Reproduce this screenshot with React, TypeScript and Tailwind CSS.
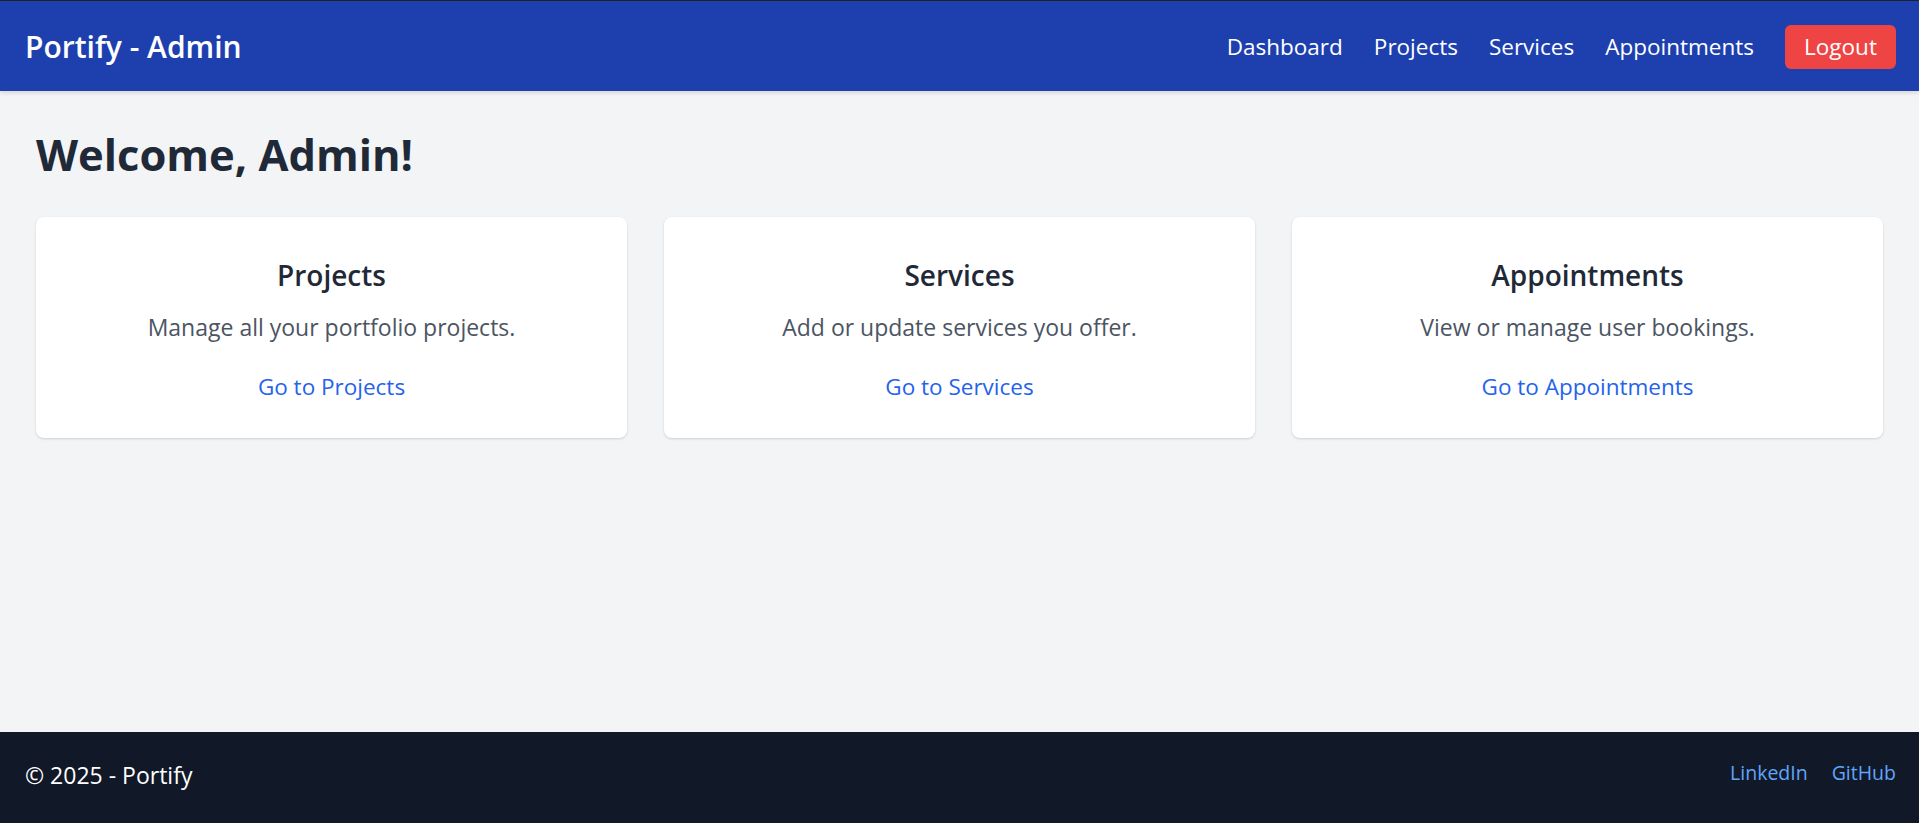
import React from "react";

const cards = [
  { title: "Projects", desc: "Manage all your portfolio projects.", link: "Go to Projects" },
  { title: "Services", desc: "Add or update services you offer.", link: "Go to Services" },
  { title: "Appointments", desc: "View or manage user bookings.", link: "Go to Appointments" },
];

export default function App() {
  return (
    <div
      className="min-h-screen flex flex-col bg-[#f3f4f6] border-t border-[#1e222b]"
      style={{ fontFamily: '"Open Sans", "Noto Sans", sans-serif' }}
    >
      <header className="h-[90px] bg-[#1e40af] text-white flex items-center justify-between pl-[25px] pr-[23px] pt-[2px] shadow-[0_2px_4px_rgba(0,0,0,0.12)] relative z-10">
        <div className="text-[30px] font-semibold leading-none">Portify - Admin</div>
        <nav className="flex items-center gap-[31px] text-[22.5px]">
          <a className="leading-none">Dashboard</a>
          <a className="leading-none">Projects</a>
          <a className="leading-none">Services</a>
          <a className="leading-none">Appointments</a>
          <button className="w-[111px] h-[44px] rounded-[6px] bg-[#ef4444] text-white text-[22.5px] leading-none flex items-center justify-center">
            Logout
          </button>
        </nav>
      </header>

      <main className="flex-1 px-[36px] pt-[37px]">
        <h1 className="text-[43.5px] font-bold leading-[54px] text-[#1f2937]">Welcome, Admin!</h1>
        <div className="mt-[35px] grid grid-cols-3 gap-[37px]">
          {cards.map((c) => (
            <div
              key={c.title}
              className="h-[221px] bg-white rounded-[8px] shadow-[0_1px_3px_rgba(0,0,0,0.1),0_1px_2px_rgba(0,0,0,0.06)] flex flex-col items-center pt-[41px]"
            >
              <div className="text-[28px] font-semibold leading-[35px] text-[#1f2937]">{c.title}</div>
              <div className="mt-[19px] text-[23px] leading-[30px] text-[#4b5563]">{c.desc}</div>
              <a className="mt-[30px] text-[22.5px] leading-[30px] text-[#2563eb]">{c.link}</a>
            </div>
          ))}
        </div>
      </main>

      <footer className="h-[91px] bg-[#111827] flex items-center justify-between pl-[25px] pr-[23px] pb-[5px]">
        <div className="text-white text-[23px] leading-none">© 2025 - Portify</div>
        <div className="flex items-center gap-[24px] text-[19.5px] text-[#60a5fa] leading-none pb-[5px]">
          <a>LinkedIn</a>
          <a>GitHub</a>
        </div>
      </footer>
    </div>
  );
}
